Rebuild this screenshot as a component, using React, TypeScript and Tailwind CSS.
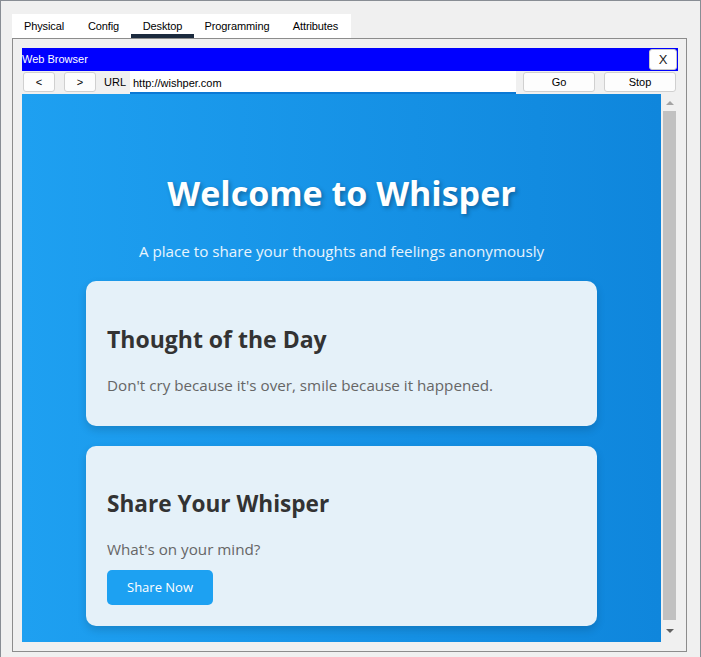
import { FC } from 'react';

const tabs = [
  { name: 'Physical', w: 'w-[64px]' },
  { name: 'Config', w: 'w-[55px]' },
  { name: 'Desktop', w: 'w-[63px]' },
  { name: 'Programming', w: 'w-[86px]' },
  { name: 'Attributes', w: 'w-[71px]' },
];

const SmallButton: FC<{ label: string; width: string }> = ({ label, width }) => (
  <button
    className={`${width} h-[20px] rounded-[3px] border border-[#d0d0d0] bg-[#fdfdfd] text-[11px] leading-none text-black flex items-center justify-center`}
  >
    {label}
  </button>
);

const App: FC = () => {
  return (
    <div className="w-[701px] h-[657px] overflow-hidden bg-[#f0f0f0] border-t border-l border-r border-[#888d94] pl-[11px] pt-[13px] font-['Liberation_Sans',Arial,sans-serif] text-[11px] text-black">
      {/* tab strip */}
      <div className="flex h-[24px] w-[339px] bg-white">
        {tabs.map((t) => (
          <div
            key={t.name}
            className={`${t.w} flex items-center justify-center whitespace-nowrap tracking-[-0.1px] ${
              t.name === 'Desktop' ? 'shadow-[inset_0_-4px_0_#1b2a3e]' : ''
            }`}
          >
            {t.name}
          </div>
        ))}
      </div>

      {/* desktop panel */}
      <div className="w-[675px] h-[614px] border border-[#8c8c8c] pl-[9px] pt-[9px]">
        {/* title bar */}
        <div className="w-[656px] h-[23px] bg-[#0000ff] flex items-center justify-between text-white">
          <span>Web Browser</span>
          <button className="mr-[1px] w-[28px] h-[21px] rounded-[3px] border border-[#c8c8c8] bg-white text-[13px] text-[#222] flex items-center justify-center">
            X
          </button>
        </div>

        {/* address row */}
        <div className="w-[656px] h-[23px] flex items-start">
          <div className="flex items-center gap-[9px] pl-[1px] pt-[1px]">
            <SmallButton label="<" width="w-[32px]" />
            <SmallButton label=">" width="w-[32px]" />
          </div>
          <span className="w-[34px] pl-[8px] h-[22px] pt-[1px] flex items-center">URL</span>
          <div className="w-[386px] h-[23px] bg-white border-b-2 border-[#0b79d5] pl-[3px] pt-[3px] flex items-center">
            http://wishper.com
          </div>
          <div className="flex items-center gap-[9px] pl-[7px] pt-[1px]">
            <SmallButton label="Go" width="w-[72px]" />
            <SmallButton label="Stop" width="w-[72px]" />
          </div>
        </div>

        {/* page + scrollbar */}
        <div className="flex w-[656px] h-[548px]">
          <div className="w-[639px] h-[548px] overflow-hidden bg-linear-to-r from-[#1ea0f1] to-[#0f86dc] font-['Open_Sans','Noto_Sans',sans-serif]">
            <div className="pt-[77px] text-center">
              <h1 className="text-[34px] leading-[44px] font-bold text-white [text-shadow:2px_2px_4px_rgba(0,0,0,0.3)]">
                Welcome to Whisper
              </h1>
              <p className="mt-[24px] text-[15.2px] leading-[24px] text-white/90">
                A place to share your thoughts and feelings anonymously
              </p>
            </div>

            <div className="mt-[18px] w-[511px] mx-auto rounded-[10px] bg-[#e5f1f9] shadow-[0_4px_8px_rgba(0,0,0,0.15)] pl-[21px] pr-5 pt-[44px] pb-[30px]">
              <h2 className="text-[23px] leading-[28px] font-bold text-[#333]">Thought of the Day</h2>
              <p className="mt-[21px] text-[15.2px] leading-[22px] text-[#666]">
                Don't cry because it's over, smile because it happened.
              </p>
            </div>

            <div className="mt-[20px] w-[511px] mx-auto rounded-[10px] bg-[#e5f1f9] shadow-[0_4px_8px_rgba(0,0,0,0.15)] pl-[21px] pr-5 pt-[44px] pb-[21px]">
              <h2 className="text-[22.6px] leading-[28px] font-bold text-[#333]">Share Your Whisper</h2>
              <p className="mt-[20px] text-[15.2px] leading-[22px] text-[#666]">What's on your mind?</p>
              <button className="mt-[10px] w-[106px] h-[35px] rounded-[5px] bg-[#1da1f2] text-white text-[13px] flex items-center justify-center">
                Share Now
              </button>
            </div>
          </div>

          {/* scrollbar */}
          <div className="w-[17px] h-[548px] flex flex-col bg-[#f0f0f0]">
            <div className="h-[17px] flex items-center justify-center">
              <svg width="8" height="5" viewBox="0 0 8 5">
                <path d="M0 5 L4 1 L8 5 Z" fill="#a3a3a3" />
              </svg>
            </div>
            <div className="ml-[2px] w-[13px] h-[509px] bg-[#c1c1c1]" />
            <div className="flex-1 flex items-center justify-center">
              <svg width="8" height="5" viewBox="0 0 8 5">
                <path d="M0 0 L8 0 L4 4 Z" fill="#606060" />
              </svg>
            </div>
          </div>
        </div>
      </div>
    </div>
  );
};

export default App;
